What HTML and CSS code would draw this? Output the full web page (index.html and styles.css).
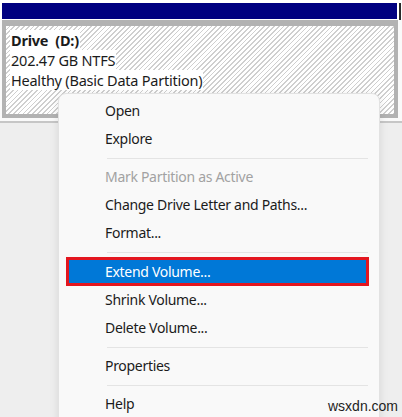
FILE: index.html
```html
<!DOCTYPE html>
<html>
<head>
<meta charset="utf-8">
<link rel="stylesheet" href="styles.css">
</head>
<body>
<div class="screen">
  <div class="top">
    <div class="titlebar"></div>
    <div class="edge"></div>
  </div>
  <div class="volume-wrap">
    <div class="volume">
      <div class="vline bold"><span>Drive&nbsp; (D:)</span></div>
      <div class="vline"><span>202.47 GB NTFS</span></div>
      <div class="vline"><span>Healthy (Basic Data Partition)</span></div>
    </div>
  </div>
  <div class="rest"></div>

  <div class="menu">
    <div class="item">Open</div>
    <div class="item">Explore</div>
    <div class="sep"></div>
    <div class="item disabled">Mark Partition as Active</div>
    <div class="item">Change Drive Letter and Paths...</div>
    <div class="item">Format...</div>
    <div class="sep"></div>
    <div class="item selected">Extend Volume...</div>
    <div class="item">Shrink Volume...</div>
    <div class="item">Delete Volume...</div>
    <div class="sep"></div>
    <div class="item">Properties</div>
    <div class="sep"></div>
    <div class="item">Help</div>
  </div>

  <div class="watermark">wsxdn.com</div>
</div>
</body>
</html>
```

FILE: styles.css
```css
html, body {
  margin: 0;
  padding: 0;
}
body {
  width: 402px;
  height: 417px;
  overflow: hidden;
  background: #eeeeee;
  font-family: "Noto Sans", "Open Sans", sans-serif;
  color: #1b1b1b;
}
.screen {
  position: relative;
  width: 402px;
  height: 417px;
  overflow: hidden;
  background: #eeeeee;
}
.top {
  display: flex;
  gap: 2px;
  background: #fff;
  padding: 3px 0 0 2px;
}
.titlebar {
  width: 395px;
  height: 16px;
  background: #000080;
}
.edge {
  width: 2px;
  height: 17px;
  background: #2a2a2a;
}
.volume-wrap {
  background: #fafafa;
  padding: 0 4px 3px 2px;
  border-bottom: 2px solid #c6c6c6;
}
.volume {
  height: 84px;
  border: 4px solid #b2b2b2;
  border-top-width: 6px;
  padding: 4px 0 0 4px;
  background: repeating-linear-gradient(135deg, #ffffff 0, #ffffff 2.2px, #cfcfcf 2.2px, #cfcfcf 3.4px);
  font-size: 14.5px;
  letter-spacing: -0.23px;
}
.vline {
  height: 20px;
  line-height: 20px;
}
.vline span {
  background: #fff;
  padding: 0 1px;
}
.bold {
  font-weight: bold;
}
.menu {
  position: absolute;
  left: 58px;
  top: 93px;
  width: 320px;
  height: 340px;
  padding-top: 3px;
  background: #f9f9f9;
  border: 1px solid #e2e2e2;
  border-radius: 8px;
  box-shadow: 0 2px 8px rgba(0, 0, 0, 0.10);
  font-size: 14px;
  letter-spacing: -0.3px;
}
.item {
  height: 28px;
  line-height: 28px;
  padding-left: 46px;
  white-space: nowrap;
}
.item.disabled {
  color: #a2a2a2;
}
.item.selected {
  height: 23px;
  line-height: 23px;
  margin: 0 10px 0 7px;
  padding-left: 36px;
  border: 3px solid #e3161f;
  background: #0078d7;
  color: #fff;
}
.sep {
  height: 1px;
  background: #e4e4e4;
  margin: 5px 11px 4px 48px;
}
.watermark {
  position: absolute;
  left: 328px;
  top: 398px;
  font-family: "Liberation Sans", sans-serif;
  font-size: 14px;
  color: #1e1e1e;
}
```
